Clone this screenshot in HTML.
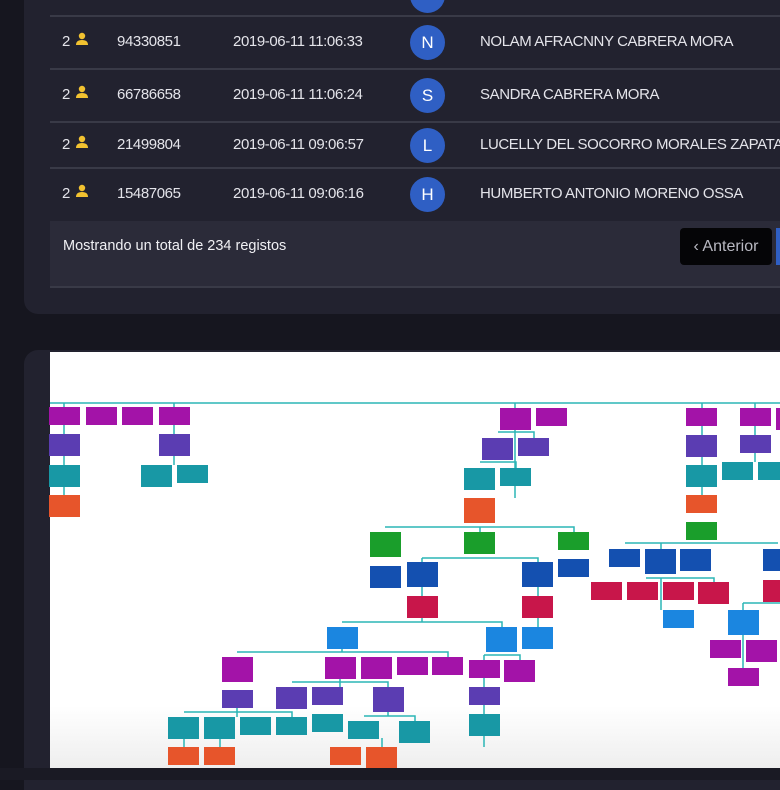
<!DOCTYPE html>
<html><head><meta charset="utf-8"><style>
*{margin:0;padding:0;box-sizing:border-box}
body{width:780px;height:780px;overflow:hidden;background:#16161f;font-family:"Liberation Sans",sans-serif;position:relative}
.card{position:absolute;left:24px;top:0;width:800px;height:314px;background:#22222f;border-radius:0 0 0 14px}
.tbl{position:absolute;left:50px;top:0;width:740px;height:220px;background:#22222f}
.line{position:absolute;left:50px;width:740px;height:2px;background:#393a47}
.row{position:absolute;left:0;width:780px;height:20px;color:#e4e4ea;font-size:15px;line-height:20px;white-space:nowrap;letter-spacing:-0.4px}
.row span{position:absolute;top:0}
.av{position:absolute;left:410px;width:35px;height:35px;border-radius:50%;background:#2f5fc4;color:#fff;text-align:center;line-height:35px;font-size:17px}
.ic{position:absolute;left:75px}
.foot{position:absolute;left:50px;top:221px;width:740px;height:67px;background:#2b2b39;border-bottom:2px solid #393a47}
.foot .t{position:absolute;left:13px;top:17px;color:#f0f0f4;font-size:14.5px;white-space:nowrap}
.btn{position:absolute;left:630px;top:7px;width:92px;height:37px;background:#050507;border-radius:4px;color:#b9b9c2;font-size:16px;line-height:37px;text-align:center}
.blue{position:absolute;left:726px;top:7px;width:20px;height:37px;background:#2f5fc4}
.card2{position:absolute;left:24px;top:350px;width:800px;height:440px;background:#22222f;border-radius:14px 0 0 0}
.chart{position:absolute;left:50px;top:352px;width:740px;height:416px;background:linear-gradient(#fff 85%,#eee)}
.bot{position:absolute;left:0;top:768px;width:780px;height:12px;background:#1a1a24}
</style></head><body>
<div class="card"></div>
<div class="tbl"></div>
<div class="line" style="top:15px"></div>
<div class="line" style="top:68px"></div>
<div class="line" style="top:121px"></div>
<div class="line" style="top:167px"></div>
<div class="av" style="top:-22px"></div>

<div class="row" style="top:32px"><span style="left:62px">2</span><svg class="ic" width="14" height="14" viewBox="0 0 14 14" style="top:0"><circle cx="7" cy="4" r="3.2" fill="#f2c230"/><path d="M1 13 Q1 8 7 8 Q13 8 13 13Z" fill="#f2c230"/></svg><span style="left:117px">94330851</span><span style="left:233px">2019-06-11 11:06:33</span><span style="left:480px">NOLAM AFRACNNY CABRERA MORA</span></div>
<div class="av" style="top:25px">N</div>
<div class="row" style="top:85px"><span style="left:62px">2</span><svg class="ic" width="14" height="14" viewBox="0 0 14 14" style="top:0"><circle cx="7" cy="4" r="3.2" fill="#f2c230"/><path d="M1 13 Q1 8 7 8 Q13 8 13 13Z" fill="#f2c230"/></svg><span style="left:117px">66786658</span><span style="left:233px">2019-06-11 11:06:24</span><span style="left:480px">SANDRA CABRERA MORA</span></div>
<div class="av" style="top:78px">S</div>
<div class="row" style="top:135px"><span style="left:62px">2</span><svg class="ic" width="14" height="14" viewBox="0 0 14 14" style="top:0"><circle cx="7" cy="4" r="3.2" fill="#f2c230"/><path d="M1 13 Q1 8 7 8 Q13 8 13 13Z" fill="#f2c230"/></svg><span style="left:117px">21499804</span><span style="left:233px">2019-06-11 09:06:57</span><span style="left:480px">LUCELLY DEL SOCORRO MORALES ZAPATA</span></div>
<div class="av" style="top:128px">L</div>
<div class="row" style="top:184px"><span style="left:62px">2</span><svg class="ic" width="14" height="14" viewBox="0 0 14 14" style="top:0"><circle cx="7" cy="4" r="3.2" fill="#f2c230"/><path d="M1 13 Q1 8 7 8 Q13 8 13 13Z" fill="#f2c230"/></svg><span style="left:117px">15487065</span><span style="left:233px">2019-06-11 09:06:16</span><span style="left:480px">HUMBERTO ANTONIO MORENO OSSA</span></div>
<div class="av" style="top:177px">H</div>

<div class="foot"><div class="t">Mostrando un total de 234 registos</div><div class="btn">‹ Anterior</div><div class="blue"></div></div>

<div class="card2"></div>
<div class="chart"></div>
<svg style="position:absolute;left:0;top:0" width="780" height="780">
<g stroke="#2bb5b5" stroke-width="1.5" fill="none">
<path d="M50 403H780"/>
<path d="M64 403V495M174 403V465M515 403V498M702 403V495M755 403V462"/>
<path d="M498 432H534V438M480 462H516V468"/>
<path d="M385 527H574V532M480 527V532"/>
<path d="M422 558H538V562M422 558V596M538 558V596M538 596V627"/>
<path d="M625 543H778M661 543V549M646 578H714V582M661 578V610"/>
<path d="M342 622H502V627M422 618V622"/>
<path d="M237 652H448V657M342 649V652"/>
<path d="M292 682H388V687M340 679V687"/>
<path d="M184 712H292V717M237 708V717"/>
<path d="M364 716H415V721M388 712V716"/>
<path d="M484 655H520V660M484 655V747"/>
<path d="M743 603H780M743 603V680"/>
<path d="M184 738V747M220 738V747M382 738V747"/>
</g>
<g>
<rect x="49" y="407" width="31" height="18" fill="#a313a8"/><rect x="86" y="407" width="31" height="18" fill="#a313a8"/><rect x="122" y="407" width="31" height="18" fill="#a313a8"/><rect x="159" y="407" width="31" height="18" fill="#a313a8"/>
<rect x="49" y="434" width="31" height="22" fill="#5b3db2"/><rect x="159" y="434" width="31" height="22" fill="#5b3db2"/>
<rect x="49" y="465" width="31" height="22" fill="#1898a5"/><rect x="141" y="465" width="31" height="22" fill="#1898a5"/><rect x="177" y="465" width="31" height="18" fill="#1898a5"/>
<rect x="49" y="495" width="31" height="22" fill="#e7552b"/>
<rect x="500" y="408" width="31" height="22" fill="#a313a8"/><rect x="536" y="408" width="31" height="18" fill="#a313a8"/><rect x="686" y="408" width="31" height="18" fill="#a313a8"/><rect x="740" y="408" width="31" height="18" fill="#a313a8"/><rect x="776" y="408" width="10" height="22" fill="#a313a8"/>
<rect x="482" y="438" width="31" height="22" fill="#5b3db2"/><rect x="518" y="438" width="31" height="18" fill="#5b3db2"/><rect x="686" y="435" width="31" height="22" fill="#5b3db2"/><rect x="740" y="435" width="31" height="18" fill="#5b3db2"/>
<rect x="464" y="468" width="31" height="22" fill="#1898a5"/><rect x="500" y="468" width="31" height="18" fill="#1898a5"/><rect x="686" y="465" width="31" height="22" fill="#1898a5"/><rect x="722" y="462" width="31" height="18" fill="#1898a5"/><rect x="758" y="462" width="25" height="18" fill="#1898a5"/>
<rect x="464" y="498" width="31" height="25" fill="#e7552b"/><rect x="686" y="495" width="31" height="18" fill="#e7552b"/>
<rect x="370" y="532" width="31" height="25" fill="#1a9e2b"/><rect x="464" y="532" width="31" height="22" fill="#1a9e2b"/><rect x="558" y="532" width="31" height="18" fill="#1a9e2b"/><rect x="686" y="522" width="31" height="18" fill="#1a9e2b"/>
<rect x="370" y="566" width="31" height="22" fill="#1450b0"/><rect x="407" y="562" width="31" height="25" fill="#1450b0"/><rect x="522" y="562" width="31" height="25" fill="#1450b0"/><rect x="558" y="559" width="31" height="18" fill="#1450b0"/><rect x="609" y="549" width="31" height="18" fill="#1450b0"/><rect x="645" y="549" width="31" height="25" fill="#1450b0"/><rect x="680" y="549" width="31" height="22" fill="#1450b0"/><rect x="763" y="549" width="20" height="22" fill="#1450b0"/>
<rect x="407" y="596" width="31" height="22" fill="#c8164a"/><rect x="522" y="596" width="31" height="22" fill="#c8164a"/><rect x="591" y="582" width="31" height="18" fill="#c8164a"/><rect x="627" y="582" width="31" height="18" fill="#c8164a"/><rect x="663" y="582" width="31" height="18" fill="#c8164a"/><rect x="698" y="582" width="31" height="22" fill="#c8164a"/><rect x="763" y="580" width="20" height="22" fill="#c8164a"/>
<rect x="663" y="610" width="31" height="18" fill="#1b86e0"/><rect x="728" y="610" width="31" height="25" fill="#1b86e0"/>
<rect x="710" y="640" width="31" height="18" fill="#a313a8"/><rect x="746" y="640" width="31" height="22" fill="#a313a8"/><rect x="728" y="668" width="31" height="18" fill="#a313a8"/>
<rect x="327" y="627" width="31" height="22" fill="#1b86e0"/><rect x="486" y="627" width="31" height="25" fill="#1b86e0"/><rect x="522" y="627" width="31" height="22" fill="#1b86e0"/>
<rect x="222" y="657" width="31" height="25" fill="#a313a8"/><rect x="325" y="657" width="31" height="22" fill="#a313a8"/><rect x="361" y="657" width="31" height="22" fill="#a313a8"/><rect x="397" y="657" width="31" height="18" fill="#a313a8"/><rect x="432" y="657" width="31" height="18" fill="#a313a8"/><rect x="469" y="660" width="31" height="18" fill="#a313a8"/><rect x="504" y="660" width="31" height="22" fill="#a313a8"/>
<rect x="222" y="690" width="31" height="18" fill="#5b3db2"/><rect x="276" y="687" width="31" height="22" fill="#5b3db2"/><rect x="312" y="687" width="31" height="18" fill="#5b3db2"/><rect x="373" y="687" width="31" height="25" fill="#5b3db2"/><rect x="469" y="687" width="31" height="18" fill="#5b3db2"/>
<rect x="168" y="717" width="31" height="22" fill="#1898a5"/><rect x="204" y="717" width="31" height="22" fill="#1898a5"/><rect x="240" y="717" width="31" height="18" fill="#1898a5"/><rect x="276" y="717" width="31" height="18" fill="#1898a5"/><rect x="312" y="714" width="31" height="18" fill="#1898a5"/><rect x="348" y="721" width="31" height="18" fill="#1898a5"/><rect x="399" y="721" width="31" height="22" fill="#1898a5"/><rect x="469" y="714" width="31" height="22" fill="#1898a5"/>
<rect x="168" y="747" width="31" height="18" fill="#e7552b"/><rect x="204" y="747" width="31" height="18" fill="#e7552b"/><rect x="330" y="747" width="31" height="18" fill="#e7552b"/><rect x="366" y="747" width="31" height="22" fill="#e7552b"/>
</g>
</svg>
<div class="bot"></div>
</body></html>
